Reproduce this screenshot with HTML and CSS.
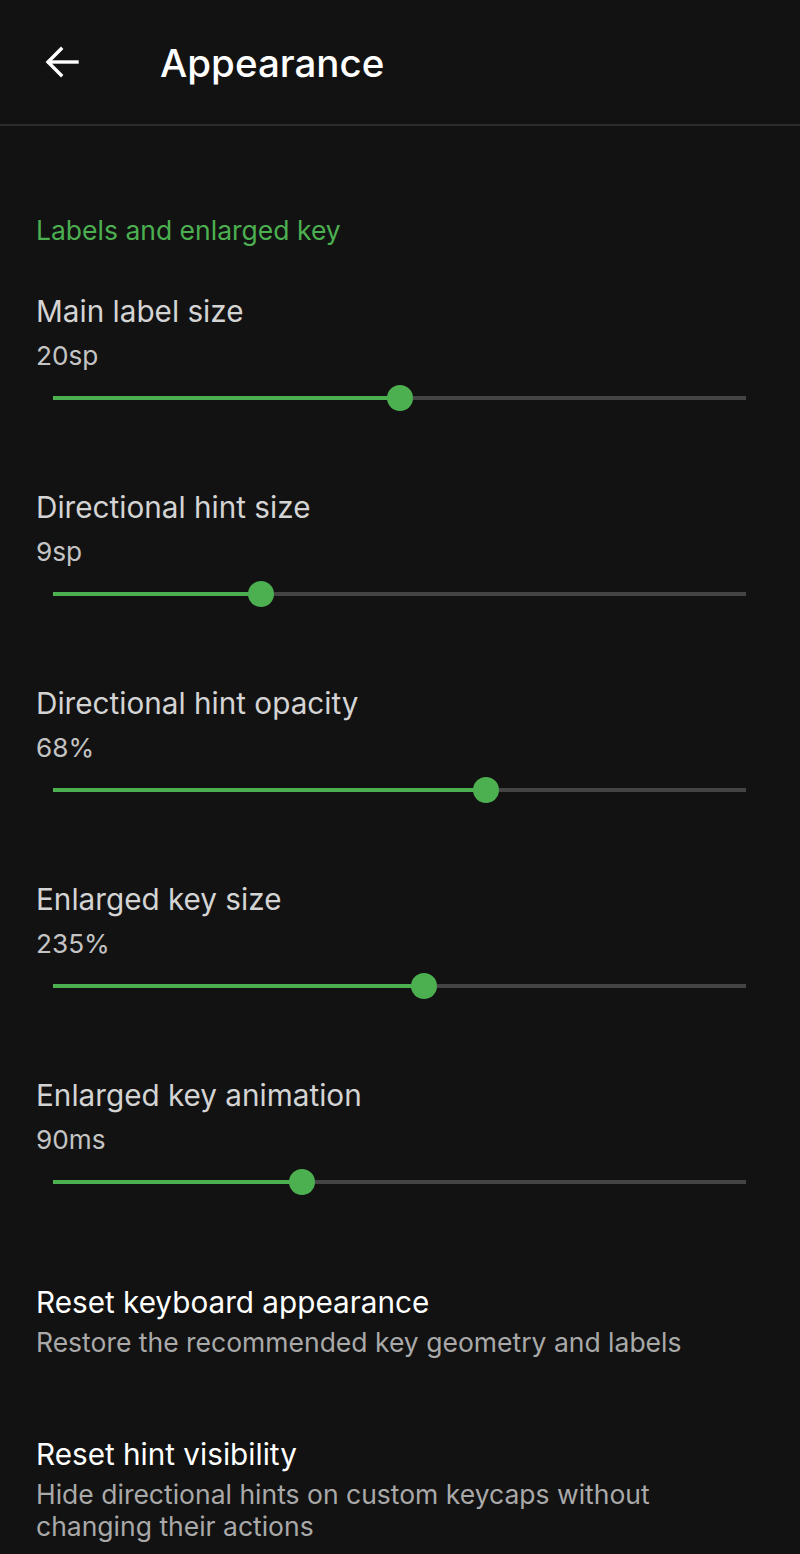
FILE: index.html
```html
<!DOCTYPE html>
<html lang="en">
<head>
<meta charset="utf-8">
<title>Appearance</title>
<link rel="stylesheet" href="styles.css">
</head>
<body>
<header class="topbar">
  <button class="back" aria-label="Back">
    <svg width="40" height="40" viewBox="0 0 40 40" fill="none" stroke="#ffffff" stroke-width="3.4" stroke-linecap="square">
      <path d="M35 20H7"/>
      <path d="M19 7L6 20l13 13"/>
    </svg>
  </button>
  <h1 class="title">Appearance</h1>
</header>
<main class="content">
  <h2 class="section">Labels and enlarged key</h2>

  <div class="setting">
    <div class="setting-title">Main label size</div>
    <div class="setting-value">20sp</div>
    <div class="slider"><div class="track"><div class="fill" style="width:50%"></div><div class="thumb" style="left:50%"></div></div></div>
  </div>

  <div class="setting">
    <div class="setting-title">Directional hint size</div>
    <div class="setting-value">9sp</div>
    <div class="slider"><div class="track"><div class="fill" style="width:30%"></div><div class="thumb" style="left:30%"></div></div></div>
  </div>

  <div class="setting">
    <div class="setting-title">Directional hint opacity</div>
    <div class="setting-value">68%</div>
    <div class="slider"><div class="track"><div class="fill" style="width:62.5%"></div><div class="thumb" style="left:62.5%"></div></div></div>
  </div>

  <div class="setting">
    <div class="setting-title">Enlarged key size</div>
    <div class="setting-value">235%</div>
    <div class="slider"><div class="track"><div class="fill" style="width:53.5%"></div><div class="thumb" style="left:53.5%"></div></div></div>
  </div>

  <div class="setting">
    <div class="setting-title">Enlarged key animation</div>
    <div class="setting-value">90ms</div>
    <div class="slider"><div class="track"><div class="fill" style="width:36%"></div><div class="thumb" style="left:36%"></div></div></div>
  </div>

  <div class="action">
    <div class="action-title">Reset keyboard appearance</div>
    <div class="action-sub">Restore the recommended key geometry and labels</div>
  </div>

  <div class="action">
    <div class="action-title">Reset hint visibility</div>
    <div class="action-sub">Hide directional hints on custom keycaps without changing their actions</div>
  </div>
</main>
</body>
</html>
```

FILE: styles.css
```css
* { box-sizing: border-box; }

html, body {
  margin: 0;
  padding: 0;
  background: #121212;
}

body {
  font-family: Inter, "Noto Sans", "Liberation Sans", sans-serif;
  color: #ffffff;
  width: 800px;
  min-height: 1554px;
}

.topbar {
  height: 126px;
  display: flex;
  align-items: center;
  border-bottom: 2px solid #2c2c2c;
  padding-left: 42px;
}

.back {
  width: 40px;
  height: 40px;
  padding: 0;
  margin: 0;
  border: 0;
  background: none;
  display: flex;
}

.title {
  margin: 2px 0 0 78px;
  font-size: 38.5px;
  font-weight: 500;
  color: #ffffff;
  letter-spacing: 0;
}

.content {
  padding: 0 36px;
}

.section {
  margin: 84px 0 39px;
  font-size: 26.5px;
  line-height: 40px;
  font-weight: 400;
  color: #4caf50;
}

.setting {
  margin-bottom: 67px;
}

.setting-title {
  font-size: 29.7px;
  line-height: 44px;
  color: #d4d4d4;
}

.setting-value {
  font-size: 26.2px;
  line-height: 45px;
  color: #c4c4c4;
}

.slider {
  height: 40px;
  display: flex;
  align-items: center;
  padding: 0 18px 0 17px;
}

.track {
  position: relative;
  width: 100%;
  height: 4px;
  background: #444444;
}

.fill {
  height: 100%;
  background: #4caf50;
}

.thumb {
  position: absolute;
  top: 50%;
  width: 26px;
  height: 26px;
  margin: -13px 0 0 -13px;
  border-radius: 50%;
  background: #4caf50;
}

.action {
  margin-top: 78px;
  margin-bottom: 74px;
  max-width: 680px;
}

.action + .action {
  margin-top: 0;
}

.action-title {
  font-size: 29.7px;
  line-height: 44px;
  color: #ffffff;
}

.action-sub {
  margin-top: 2px;
  font-size: 26.5px;
  line-height: 32px;
  color: #a9a9a9;
}
```
